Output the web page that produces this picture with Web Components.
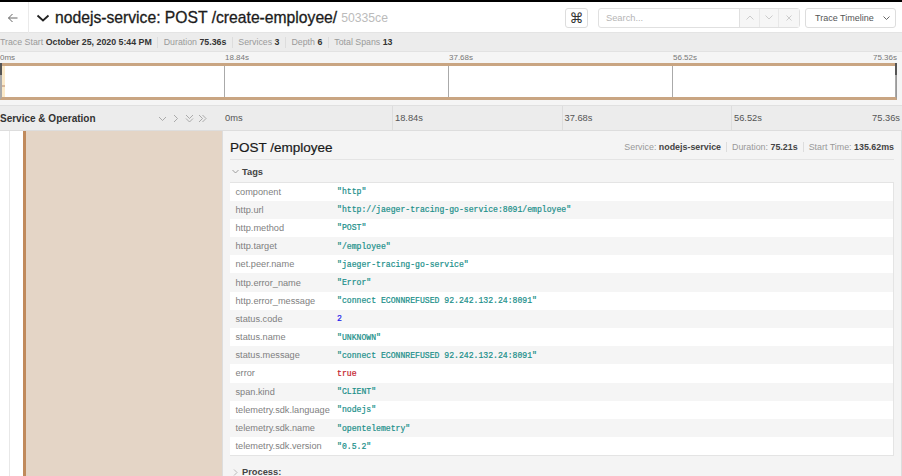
<!doctype html>
<html><head><meta charset="utf-8"><style>
html,body{margin:0;padding:0;background:#fff;height:476px;overflow:hidden}
body{font-family:"Liberation Sans",Arial,sans-serif;color:#333}
</style></head><body>
<trace-page></trace-page>
<template id="t-page"><style>
:host{display:flex;flex-direction:column;width:902px;height:476px;overflow:hidden}
.blk{height:2px;background:#000;flex:none}
</style><div class="blk"></div><trace-header></trace-header><trace-summary></trace-summary><trace-minimap></trace-minimap><timeline-head></timeline-head><trace-body></trace-body></template>

<template id="t-header"><style>
:host{display:flex;height:31px;align-items:center;flex:none;box-sizing:border-box;border-bottom:1px solid #e4e4e4;background:#fff}
.back{width:29px;height:31px;flex:none;display:flex;align-items:center;box-sizing:border-box;padding:1px 0 0 7px;border-right:1px solid #eaeaea}
.chev{margin:1px 5px 0 7px;flex:none;display:block}
h1{margin:0;font:400 15.7px/31px "Liberation Sans",sans-serif;color:#1c1c1c;white-space:nowrap;-webkit-text-stroke:.3px #1c1c1c}
.id{color:#bbb;margin-left:4px;font:12.2px "Liberation Sans",sans-serif;padding-top:2px}
.sp{flex:1}
.cmd{width:23px;height:20px;box-sizing:border-box;border:1px solid #ddd;border-radius:3px;display:flex;align-items:center;justify-content:center;font:14px "DejaVu Sans",sans-serif;color:#333;margin:1px 10px 0 0}
.search{display:flex;width:202px;height:20px;box-sizing:border-box;border:1px solid #e0e0e0;border-radius:3px;margin:1px 5px 0 0}
.input{flex:1;font:9.3px "Liberation Sans",sans-serif;color:#b5b5b5;padding-left:7px;line-height:18px;border-right:1px solid #e0e0e0}
.b{width:19.6px;background:#f6f6f6;border-right:1px solid #e8e8e8;display:flex;align-items:center;justify-content:center;box-sizing:border-box}
.b:last-child{border:0}
.tl{width:91px;height:20px;box-sizing:border-box;border:1px solid #ddd;border-radius:3px;font:9px "Liberation Sans",sans-serif;color:#555;display:flex;align-items:center;padding-left:9px;gap:9px;margin:1px 6px 0 0;white-space:nowrap}
</style>
<div class="back"><svg width="11" height="10" viewBox="0 0 11 10" fill="none" stroke="#666" stroke-width="1"><path d="M10.500 5H1.500M5.500 1 1.500 5l4 4"/></svg></div>
<svg class="chev" width="14" height="8" viewBox="0 0 14 8" fill="none" stroke="#222" stroke-width="1.800"><path d="M1.500 1.500 7 6.500l5.500-5"/></svg>
<h1>nodejs-service: POST /create-employee/</h1><span class="id">50335ce</span><span class="sp"></span>
<div class="cmd">⌘</div>
<div class="search"><div class="input">Search...</div>
<div class="b"><svg width="8" height="5" viewBox="0 0 8 5" fill="none" stroke="#ccc"><path d="M.5 4.500 4 1l3.500 3.500"/></svg></div>
<div class="b"><svg width="8" height="5" viewBox="0 0 8 5" fill="none" stroke="#ccc"><path d="M.5.500 4 4 7.500.500"/></svg></div>
<div class="b"><svg width="6" height="6" viewBox="0 0 6 6" fill="none" stroke="#ccc"><path d="M.5.500l5 5m0-5-5 5"/></svg></div></div>
<div class="tl">Trace Timeline <svg width="7" height="4" viewBox="0 0 7 4" fill="none" stroke="#666"><path d="M.5.500 3.500 3.500 6.500.500"/></svg></div></template>

<template id="t-summary"><style>
:host{display:flex;height:19px;flex:none;align-items:center;background:#ececec;font:8.8px "Liberation Sans",sans-serif;color:#9a9a9a;white-space:nowrap;box-sizing:border-box;padding-top:1px;border-bottom:1px solid #e2e2e2}
b{color:#333;font-weight:700}
span{padding-right:5.500px;margin-right:5.500px;border-right:1px solid #ddd;line-height:11px}
span:last-child{border:0}
</style><span>Trace Start <b>October 25, 2020 5:44 PM</b></span><span>Duration <b>75.36s</b></span><span>Services <b>3</b></span><span>Depth <b>6</b></span><span>Total Spans <b>13</b></span></template>

<template id="t-mini"><style>
:host{display:block;flex:none;height:54px;background:#f5f5f5;box-sizing:border-box;border-bottom:1px solid #e0e0e0}
.tk{position:absolute}
.wrap{position:relative;height:11px;font:8px/11px "Liberation Sans",sans-serif;color:#777}
.bar{position:relative;height:37px;box-sizing:border-box;background:#fff;border-top:3px solid #c9a582;border-bottom:3px solid #c9a582;border-left:2px solid #aaa;border-right:1px solid #999;margin-right:5px;display:grid;grid-template-columns:222.500px 224px 224px 1fr}
.bar i{border-right:1px solid #aaa}
.bar i:last-child{border:0}
.cap{position:absolute;width:2px;background:#555;top:-3px;height:12px}
.sw{position:absolute;left:0;top:0;width:3px;height:31px;background:linear-gradient(#fbe9c8 0 60%,#d8b79a 60% 68%,#fbe9c8 68%)}
</style><div class="wrap"><span class="tk" style="left:0">0ms</span><span class="tk" style="left:225px">18.84s</span><span class="tk" style="left:449px">37.68s</span><span class="tk" style="left:673px">56.52s</span><span class="tk" style="right:5px">75.36s</span></div>
<div class="bar"><i></i><i></i><i></i><i></i><div class="sw"></div><div class="cap" style="left:-2px"></div><div class="cap" style="right:-1px"></div></div></template>

<template id="t-head"><style>
:host{display:flex;flex:none;height:25px;background:#ececec;box-sizing:border-box;border-bottom:1px solid #ddd;font:9.300px/25px "Liberation Sans",sans-serif;color:#555}
.l{width:222px;flex:none;display:flex;align-items:center;justify-content:space-between;box-sizing:border-box;padding:1px 15px 0 0}
.l b{font-weight:700;color:#333;font-size:10px}
.ic{display:flex;gap:4.500px;align-items:center}
.r{flex:1;display:grid;grid-template-columns:170px 169.500px 169.500px 1fr;padding-right:2px}
.r span{padding-left:2px;border-left:1px solid #ddd}
.r span:first-child{border:0}
.r span:last-child{display:flex;justify-content:space-between;padding-right:0}
</style><div class="l"><b>Service &amp; Operation</b><div class="ic">
<svg width="9" height="9" viewBox="0 0 9 9" fill="none" stroke="#999" stroke-width=".8"><path d="M1 3l3.500 3.500L8 3"/></svg>
<svg width="9" height="9" viewBox="0 0 9 9" fill="none" stroke="#999" stroke-width=".8"><path d="M3 1l3.500 3.500L3 8"/></svg>
<svg width="9" height="9" viewBox="0 0 9 9" fill="none" stroke="#999" stroke-width=".8"><path d="M1 1l3.500 3.500L8 1M1 4.500 4.500 8 8 4.500"/></svg>
<svg width="9" height="9" viewBox="0 0 9 9" fill="none" stroke="#999" stroke-width=".8"><path d="M1 1l3.500 3.500L1 8M4.500 1 8 4.500 4.500 8"/></svg></div></div>
<div class="r"><span style="padding-left:3px">0ms</span><span>18.84s</span><span>37.68s</span><span><a>56.52s</a><a>75.36s</a></span></div></template>

<template id="t-body"><style>
:host{display:flex;flex:1;min-height:0;background:#fff}
.l{width:222px;flex:none;box-sizing:border-box;padding-left:9px;display:flex}
.g{width:14px;border-left:1px solid #e8e8e8;box-sizing:border-box}
.bar{flex:1;background:#e4d5c6;border-left:3px solid #c08a5c}
.d{flex:1;min-width:0;background:#f4f4f4;box-sizing:border-box;padding:0 7px;border-left:1px solid #ddd;border-right:1px solid #ddd;overflow:hidden}
.top{display:flex;justify-content:space-between;align-items:center;height:29px;box-sizing:border-box;padding-top:4px;border-bottom:1px solid #e4e4e4}
h2{margin:0;font:400 13.500px "Liberation Sans",sans-serif;color:#1a1a1a;-webkit-text-stroke:.2px #1a1a1a}
.m{font:8.900px "Liberation Sans",sans-serif;color:#999;white-space:nowrap}
.m b{color:#444}
.m span{padding-right:5px;margin-right:5px;border-right:1px solid #ddd}
.m span:last-child{border:0;padding:0;margin:0}
.sec{display:flex;align-items:center;gap:3px;height:21.500px;box-sizing:border-box;padding:2px 0 0 2px;font:700 9.300px "Liberation Sans",sans-serif;color:#444}
.t{background:#fff;border:1px solid #e4e4e4;border-left:0}
.proc{margin-top:6px;height:20px;padding-top:0}
</style><div class="l"><div class="g"></div><div class="bar"></div></div>
<div class="d"><div class="top"><h2>POST /employee</h2><div class="m"><span>Service: <b>nodejs-service</b></span><span>Duration: <b>75.21s</b></span><span>Start Time: <b>135.62ms</b></span></div></div>
<div class="sec"><svg width="7" height="5" viewBox="0 0 7 5" fill="none" stroke="#888" stroke-width=".8"><path d="M.5 1 3.500 4 6.500 1"/></svg>Tags</div>
<div class="t">
<tag-row k="component" v='"http"'></tag-row>
<tag-row k="http.url" v='"http://jaeger-tracing-go-service:8091/employee"'></tag-row>
<tag-row k="http.method" v='"POST"'></tag-row>
<tag-row k="http.target" v='"/employee"'></tag-row>
<tag-row k="net.peer.name" v='"jaeger-tracing-go-service"'></tag-row>
<tag-row k="http.error_name" v='"Error"'></tag-row>
<tag-row k="http.error_message" v='"connect ECONNREFUSED 92.242.132.24:8091"'></tag-row>
<tag-row k="status.code" v="2" c="#2222ee"></tag-row>
<tag-row k="status.name" v='"UNKNOWN"'></tag-row>
<tag-row k="status.message" v='"connect ECONNREFUSED 92.242.132.24:8091"'></tag-row>
<tag-row k="error" v="true" c="#c5202a"></tag-row>
<tag-row k="span.kind" v='"CLIENT"'></tag-row>
<tag-row k="telemetry.sdk.language" v='"nodejs"'></tag-row>
<tag-row k="telemetry.sdk.name" v='"opentelemetry"'></tag-row>
<tag-row k="telemetry.sdk.version" v='"0.5.2"'></tag-row>
</div>
<div class="sec proc"><svg width="7" height="7" viewBox="0 0 7 7" fill="none" stroke="#aaa" stroke-width=".8"><path d="M2 .500 5 3.500 2 6.500"/></svg>Process:</div>
</div></template>

<script>
function def(n,id){customElements.define(n,class extends HTMLElement{constructor(){super();this.attachShadow({mode:'open'}).appendChild(document.getElementById(id).content.cloneNode(true));}});}
def('trace-page','t-page');def('trace-header','t-header');def('trace-summary','t-summary');def('trace-minimap','t-mini');def('timeline-head','t-head');def('trace-body','t-body');
customElements.define('tag-row',class extends HTMLElement{constructor(){super();const s=this.attachShadow({mode:'open'});
s.innerHTML=`<style>:host{display:flex;height:18.2px;align-items:center;padding-left:5.500px;font:9.200px "Liberation Sans",sans-serif;color:#7f7f7f;white-space:nowrap}
:host(:nth-child(even)){background:#f5f5f5}
.k{width:101.500px;flex:none}.v{font:8.150px "Liberation Mono",monospace;color:#1a8f8a;-webkit-text-stroke:.2px currentColor}</style><div class="k"></div><div class="v"></div>`;
s.querySelector('.k').textContent=this.getAttribute('k');const v=s.querySelector('.v');v.textContent=this.getAttribute('v');if(this.getAttribute('c'))v.style.color=this.getAttribute('c');}});
</script></body></html>
